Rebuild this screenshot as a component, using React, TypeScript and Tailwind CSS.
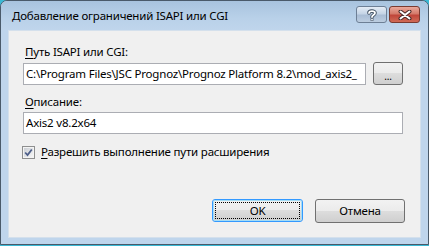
import React from "react";

const font = { fontFamily: '"Segoe UI", "Noto Sans", sans-serif', letterSpacing: "-0.2px" };

function WinButton({ children, def, className }: { children: React.ReactNode; def?: boolean; className?: string }) {
  return (
    <div
      className={
        "relative flex items-center justify-center rounded-[3px] border text-[11.5px] text-black " +
        (def ? "border-[#3399ff] " : "border-[#707070] ") +
        (className ?? "")
      }
      style={{
        background: "linear-gradient(to bottom, #f2f2f2 0%, #ebebeb 50%, #dddddd 50%, #cfcfcf 100%)",
      }}
    >
      {def && <div className="pointer-events-none absolute inset-[2px] border border-dotted border-black" />}
      {def && <div className="pointer-events-none absolute inset-0 rounded-[2px] border border-[#a4dcf5]" />}
      <span className="relative leading-none">{children}</span>
    </div>
  );
}

function Underlined({ first, rest }: { first: string; rest: string }) {
  return (
    <span>
      <span className="underline decoration-1 underline-offset-2">{first}</span>
      {rest}
    </span>
  );
}

export default function App() {
  return (
    <div className="h-[246px] w-[429px] bg-[#3ab8d4]" style={font}>
      <div className="flex h-[245px] w-[429px] flex-col overflow-hidden rounded-t-[7px] border border-[#4a5a6a] bg-[#bfd5ec]">
        {/* title bar */}
        <div
          className="flex h-[29px] shrink-0 items-center pl-[11px] pr-[8px]"
          style={{ background: "linear-gradient(to bottom, #a8c3de 0%, #b9d1e9 60%, #bfd5ec 100%)" }}
        >
          <span className="flex-1 text-[11.5px] leading-none text-black">Добавление ограничений ISAPI или CGI</span>
          <div className="mt-[-2px] flex gap-[2px]">
            <div
              className="flex h-[17px] w-[31px] items-center justify-center rounded-[3px] border border-[#6d7f95]"
              style={{ background: "linear-gradient(to bottom, #e4ecf5 0%, #c5d4e6 45%, #a9bdd5 55%, #bccde0 100%)" }}
            >
              <svg width="10" height="12" viewBox="0 0 10 12">
                <path
                  d="M2 4 C2 1.5 8 1.5 8 4 C8 6 5 6 5 8"
                  fill="none"
                  stroke="#3b4a5c"
                  strokeWidth="3.6"
                  strokeLinecap="round"
                />
                <path
                  d="M2 4 C2 1.5 8 1.5 8 4 C8 6 5 6 5 8"
                  fill="none"
                  stroke="#ffffff"
                  strokeWidth="1.8"
                  strokeLinecap="round"
                />
                <rect x="3.6" y="9.3" width="2.8" height="2.5" fill="#3b4a5c" />
                <rect x="4.2" y="9.8" width="1.6" height="1.5" fill="#ffffff" />
              </svg>
            </div>
            <div
              className="flex h-[17px] w-[31px] items-center justify-center rounded-[3px] border border-[#7a3a30]"
              style={{ background: "linear-gradient(to bottom, #eaa89b 0%, #d47a6a 45%, #c0463a 55%, #d06a56 100%)" }}
            >
              <svg width="14" height="10" viewBox="0 0 14 10">
                <path d="M2.5 1.5 L11.5 8.5 M11.5 1.5 L2.5 8.5" stroke="#4a2a28" strokeWidth="4" strokeLinecap="round" />
                <path d="M2.5 1.5 L11.5 8.5 M11.5 1.5 L2.5 8.5" stroke="#ffffff" strokeWidth="2" strokeLinecap="round" />
              </svg>
            </div>
          </div>
        </div>
        {/* content */}
        <div className="mx-[7px] mb-[6px] flex flex-1 flex-col border border-[#d4e0ec] bg-[#f0f0f0] pl-[14px] pr-[15px] pt-[13px] pb-[14px]">
          <div className="pl-[2px] text-[11.5px] leading-[16px] text-black">
            <Underlined first="П" rest="уть ISAPI или CGI:" />
          </div>
          <div className="mt-[2px] flex items-center gap-[7px]">
            <div className="flex h-[22px] w-[343px] items-center overflow-hidden whitespace-nowrap border border-[#abadb3] bg-white pl-[2px] text-[11.5px] text-black">
              C:\Program Files\JSC Prognoz\Prognoz Platform 8.2\mod_axis2_
            </div>
            <WinButton className="h-[23px] w-[30px]">
              <span className="relative top-[2px] text-[10px]">...</span>
            </WinButton>
          </div>
          <div className="mt-[9px] pl-[2px] text-[11.5px] leading-[16px] text-black">
            <Underlined first="О" rest="писание:" />
          </div>
          <div className="mt-[2px] flex h-[22px] w-[380px] items-center border border-[#abadb3] bg-white pl-[2px] text-[11.5px] text-black">
            Axis2 v8.2x64
          </div>
          <div className="mt-[10px] flex items-center gap-[6px]">
            <div className="ml-[-1px] flex h-[13px] w-[13px] items-center justify-center border border-[#8e8f8f] bg-[#f4f4f4]">
              <div
                className="flex h-[9px] w-[9px] items-center justify-center"
                style={{ background: "linear-gradient(135deg, #cbcfd5 0%, #f6f6f6 100%)" }}
              >
                <svg width="9" height="9" viewBox="0 0 9 9">
                  <path d="M1.2 4.5 L3.5 7 L7.8 1.5" fill="none" stroke="#4e5f8a" strokeWidth="1.8" />
                </svg>
              </div>
            </div>
            <span className="text-[11.5px] leading-[16px] text-black">
              <Underlined first="Р" rest="азрешить выполнение пути расширения" />
            </span>
          </div>
          <div className="mt-auto flex justify-end gap-[12px]">
            <WinButton def className="h-[23px] w-[91px]">
              OK
            </WinButton>
            <WinButton className="h-[24px] w-[90px]">Отмена</WinButton>
          </div>
        </div>
      </div>
    </div>
  );
}
